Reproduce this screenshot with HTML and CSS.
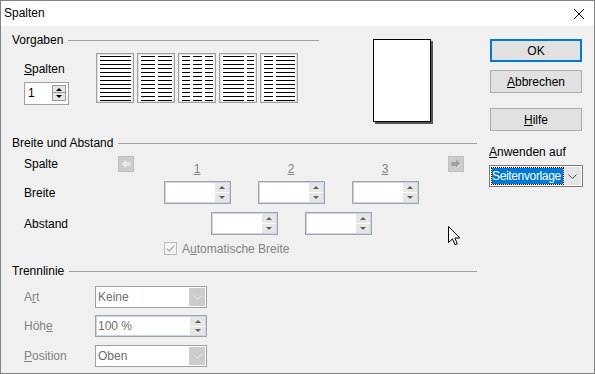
FILE: index.html
```html
<!DOCTYPE html>
<html lang="de">
<head>
    <meta charset="UTF-8">
    <meta name="viewport" content="width=device-width, initial-scale=1.0">
    <title>Spalten</title>
    <link rel="stylesheet" href="styles.css">
</head>
<body>
    <div class="dialog">
        <div class="titlebar">
            <span class="title">Spalten</span>
            <svg class="close" width="10" height="10" viewBox="0 0 10 10"><path d="M0 0L10 10M10 0L0 10" stroke="#000" stroke-width="1"/></svg>
        </div>
        <div class="content">
            <div class="main">
                <div class="top">
                    <div class="vorgaben">
                        <div class="legend"><span>Vorgaben</span><span class="rule"></span></div>
                        <div class="vorgaben-body">
                            <div class="count">
                                <div><u>S</u>palten</div>
                                <div class="count-spin">
                                    <span class="count-value">1</span>
                                    <div class="count-btns">
                                        <span class="cbtn up"></span>
                                        <span class="cbtn down"></span>
                                    </div>
                                </div>
                            </div>
                            <div class="presets">
                                <div class="preset"><span class="col"></span></div>
                                <div class="preset"><span class="col"></span><span class="col"></span></div>
                                <div class="preset"><span class="col"></span><span class="col"></span><span class="col"></span></div>
                                <div class="preset"><span class="col w3"></span><span class="col"></span></div>
                                <div class="preset"><span class="col"></span><span class="col w2"></span></div>
                            </div>
                        </div>
                    </div>
                    <div class="page-preview"></div>
                </div>

                <div class="section sec-width">
                    <div class="legend"><span>Breite und Abstand</span><span class="rule"></span></div>
                    <div class="row row-cols">
                        <span class="label-cols">Spalte</span>
                        <span class="nav">
                            <svg width="14" height="14" viewBox="0 0 14 14"><path d="M2.5 7L7 2.5V5H11.5V9H7V11.5Z" fill="#e9e9e9"/></svg>
                        </span>
                        <span class="colnum first"><u>1</u></span>
                        <span class="colnum"><u>2</u></span>
                        <span class="colnum"><u>3</u></span>
                        <span class="nav nav-next">
                            <svg width="14" height="14" viewBox="0 0 14 14"><path d="M11.5 7L7 2.5V5H2.5V9H7V11.5Z" fill="#9f9f9f"/><path d="M7 11.5L11.5 7" stroke="#fff" stroke-width="1"/></svg>
                        </span>
                    </div>
                    <div class="row row-field">
                        <span class="label-breite">Breite</span>
                        <div class="spin">
                            <span class="spin-text"></span>
                            <div class="spin-btns"><span class="sbtn up"></span><span class="sbtn down"></span></div>
                        </div>
                        <div class="spin">
                            <span class="spin-text"></span>
                            <div class="spin-btns"><span class="sbtn up"></span><span class="sbtn down"></span></div>
                        </div>
                        <div class="spin">
                            <span class="spin-text"></span>
                            <div class="spin-btns"><span class="sbtn up"></span><span class="sbtn down"></span></div>
                        </div>
                    </div>
                    <div class="row row-field">
                        <span class="label-abstand">Abstand</span>
                        <div class="spin">
                            <span class="spin-text"></span>
                            <div class="spin-btns"><span class="sbtn up"></span><span class="sbtn down"></span></div>
                        </div>
                        <div class="spin">
                            <span class="spin-text"></span>
                            <div class="spin-btns"><span class="sbtn up"></span><span class="sbtn down"></span></div>
                        </div>
                    </div>
                    <div class="row row-check">
                        <svg class="check" width="13" height="13" viewBox="0 0 13 13"><rect x="0.5" y="0.5" width="12" height="12" fill="#f3f3f3" stroke="#bcbcbc"/><path d="M2.8 6.6L5.3 9.1L10.2 3.6" fill="none" stroke="#a8a8a8" stroke-width="1.2"/></svg>
                        <span class="disabled">A<u>u</u>tomatische Breite</span>
                    </div>
                </div>

                <div class="section sec-line">
                    <div class="legend"><span>Trennlinie</span><span class="rule"></span></div>
                    <div class="row row-line">
                        <span class="label-line disabled">A<u>r</u>t</span>
                        <div class="combo">
                            <span>Keine</span>
                            <span class="combo-btn"><svg width="9" height="5" viewBox="0 0 9 5"><path d="M0.5 0.5L4.5 4.5L8.5 0.5" fill="none" stroke="#e6e6e6"/></svg></span>
                        </div>
                    </div>
                    <div class="row row-line">
                        <span class="label-line disabled">Höh<u>e</u></span>
                        <div class="spin spin-wide">
                            <span class="spin-text">100 %</span>
                            <div class="spin-btns"><span class="sbtn up"></span><span class="sbtn down"></span></div>
                        </div>
                    </div>
                    <div class="row row-line last">
                        <span class="label-line disabled"><u>P</u>osition</span>
                        <div class="combo">
                            <span>Oben</span>
                            <span class="combo-btn"><svg width="9" height="5" viewBox="0 0 9 5"><path d="M0.5 0.5L4.5 4.5L8.5 0.5" fill="none" stroke="#e6e6e6"/></svg></span>
                        </div>
                    </div>
                </div>
            </div>

            <div class="side">
                <button class="btn btn-default">OK</button>
                <button class="btn"><u>A</u>bbrechen</button>
                <button class="btn btn-help"><u>H</u>ilfe</button>
                <div class="apply-label"><u>A</u>nwenden auf</div>
                <div class="apply-select">
                    <span class="apply-value">Seitenvorlage</span>
                    <span class="apply-btn"><svg width="9" height="5" viewBox="0 0 9 5"><path d="M0.5 0.5L4.5 4.5L8.5 0.5" fill="none" stroke="#555"/></svg></span>
                </div>
            </div>
        </div>

        <svg class="cursor" width="13" height="20" viewBox="0 0 13 20"><path d="M0.5 0.5V16.5L4.5 12.8L7 18.8L9.3 17.8L6.9 12H11.8Z" fill="#fff" stroke="#000"/></svg>
    </div>
</body>
</html>
```

FILE: styles.css
```css
* {
    box-sizing: border-box;
}

body {
    margin: 0;
    font-family: "Liberation Sans", Arial, sans-serif;
    font-size: 12px;
    line-height: 16px;
    color: #000;
}

.dialog {
    position: relative;
    width: 595px;
    height: 374px;
    border: 1px solid #838383;
    background-color: #f0f0f0;
    display: flex;
    flex-direction: column;
}

.titlebar {
    height: 25px;
    flex: none;
    background-color: #fff;
    display: flex;
    align-items: center;
    justify-content: space-between;
    padding: 0 10px 0 3px;
    line-height: 25px;
}

.content {
    display: flex;
    padding-left: 11px;
}

.main {
    width: 465px;
    padding-top: 6px;
}

.side {
    width: 94px;
    margin-left: 12px;
    padding-top: 13px;
    display: flex;
    flex-direction: column;
}

/* group headings */
.legend {
    display: flex;
    align-items: center;
    height: 16px;
}

.rule {
    flex: 1;
    height: 1px;
    margin-left: 5px;
    background-color: #a0a0a0;
}

.disabled {
    color: #838383;
}

/* Vorgaben */
.top {
    display: flex;
    align-items: flex-start;
}

.vorgaben {
    width: 307px;
}

.vorgaben-body {
    display: flex;
    align-items: flex-start;
}

.count {
    width: 45px;
    margin-left: 12px;
    padding-top: 13px;
}

.count-spin {
    height: 23px;
    margin-top: 5px;
    border: 1px solid #a0a0a0;
    background-color: #fff;
    display: flex;
    justify-content: space-between;
    padding: 0 2px 0 3px;
}

.count-value {
    line-height: 21px;
}

.count-btns {
    width: 14px;
    margin-top: 2px;
    display: flex;
    flex-direction: column;
}

.cbtn {
    height: 8px;
    border: 1px solid #9a9a9a;
    background-color: #e6e6e6;
    display: flex;
    align-items: center;
    justify-content: center;
}

.cbtn.down {
    border-top: none;
}

.cbtn.up::after,
.sbtn.up::after {
    content: "";
    border-left: 3px solid transparent;
    border-right: 3px solid transparent;
    border-bottom: 3px solid #000;
}

.cbtn.down::after,
.sbtn.down::after {
    content: "";
    border-left: 3px solid transparent;
    border-right: 3px solid transparent;
    border-top: 3px solid #000;
}

.presets {
    display: flex;
    gap: 3px;
    margin-left: 27px;
    margin-top: 5px;
}

.preset {
    width: 38px;
    height: 50px;
    border: 1px solid #a0a0a0;
    box-shadow: inset 0 0 0 1px #e2e2e2;
    background-color: #fff;
    padding: 2px 2px 0 3px;
    display: flex;
    gap: 3px;
}

.col {
    flex: 1;
    height: 45px;
    background: repeating-linear-gradient(to bottom, #000 0, #000 1px, transparent 1px, transparent 4px);
}

.col.w3 {
    flex: 3;
}

.col.w2 {
    flex: 2;
}

.page-preview {
    width: 58px;
    height: 83px;
    margin-left: 54px;
    margin-top: 7px;
    border: 1px solid #000;
    background-color: #fff;
    box-shadow: 2px 2px 0 #555;
}

/* Breite und Abstand / Trennlinie */
.sec-width {
    margin-top: 13px;
}

.sec-line {
    margin-top: 8px;
}

.row {
    display: flex;
    align-items: center;
    padding-left: 12px;
}

.row-cols {
    height: 18px;
    margin-top: 4px;
}

.row-field {
    height: 23px;
    margin-top: 8px;
}

.row-check {
    height: 13px;
    margin-top: 7px;
    padding-left: 152px;
}

.row-line {
    height: 22px;
    margin-top: 7px;
}

.row-line.last {
    margin-top: 8px;
}

.label-cols {
    width: 94px;
}

.label-breite {
    width: 140px;
}

.label-abstand {
    width: 187px;
}

.label-line {
    width: 71px;
}

.nav {
    width: 16px;
    height: 16px;
    border: 1px solid #c2c2c2;
    background-color: #cbcbcb;
    display: flex;
}

.nav-next {
    margin-left: 16px;
}

.colnum {
    width: 94px;
    align-self: flex-start;
    margin-top: 6px;
    text-align: center;
    color: #838383;
}

.colnum.first {
    margin-left: 16px;
}

.spin {
    width: 67px;
    height: 23px;
    margin-right: 27px;
    border: 1px solid #a4a4a4;
    box-shadow: inset 0 0 0 1px #c3d8ee;
    background-color: #fff;
    display: flex;
    justify-content: space-between;
    padding: 1px 1px 1px 3px;
}

.spin-wide {
    width: 112px;
    height: 22px;
    margin-right: 0;
    padding-left: 2px;
}

.spin-text {
    line-height: 18px;
    color: #6d6d6d;
}

.spin-btns {
    width: 14px;
    display: flex;
    flex-direction: column;
    gap: 1px;
}

.spin-wide .spin-btns {
    width: 15px;
}

.sbtn {
    flex: 1;
    background-color: #e6e6e6;
    display: flex;
    align-items: center;
    justify-content: center;
}

.sbtn.up::after {
    border-bottom-color: #5f5f5f;
}

.sbtn.down::after {
    border-top-color: #5f5f5f;
}

.check {
    margin-right: 5px;
}

.combo {
    width: 112px;
    height: 22px;
    border: 1px solid #a0a0a0;
    background-color: #fff;
    display: flex;
    justify-content: space-between;
    align-items: center;
    padding: 1px 1px 1px 2px;
    color: #6d6d6d;
}

.combo-btn {
    width: 16px;
    height: 18px;
    background-color: #cccccc;
    display: flex;
    align-items: center;
    justify-content: center;
}

/* buttons on the right */
.btn {
    width: 92px;
    height: 23px;
    margin-left: 1px;
    padding: 0;
    font: inherit;
    color: #000;
    background-color: #e1e1e1;
    border: 1px solid #adadad;
}

.btn-default {
    border: 2px solid #0078d7;
}

.btn + .btn {
    margin-top: 8px;
}

.btn + .btn-help {
    margin-top: 15px;
}

.apply-label {
    margin-top: 13px;
}

.apply-select {
    height: 22px;
    margin-top: 5px;
    border: 1px solid #7a7a7a;
    background-color: #fff;
    padding: 1px;
    display: flex;
}

.apply-value {
    flex: 1;
    overflow: hidden;
    white-space: nowrap;
    padding-left: 0;
    letter-spacing: -0.35px;
    border: 1px dotted #000;
    background-color: #0078d7;
    background-clip: padding-box;
    color: #fff;
}

.apply-btn {
    width: 17px;
    background-color: #e5e5e5;
    display: flex;
    align-items: center;
    justify-content: center;
}

.cursor {
    position: absolute;
    left: 447px;
    top: 225px;
}
```
